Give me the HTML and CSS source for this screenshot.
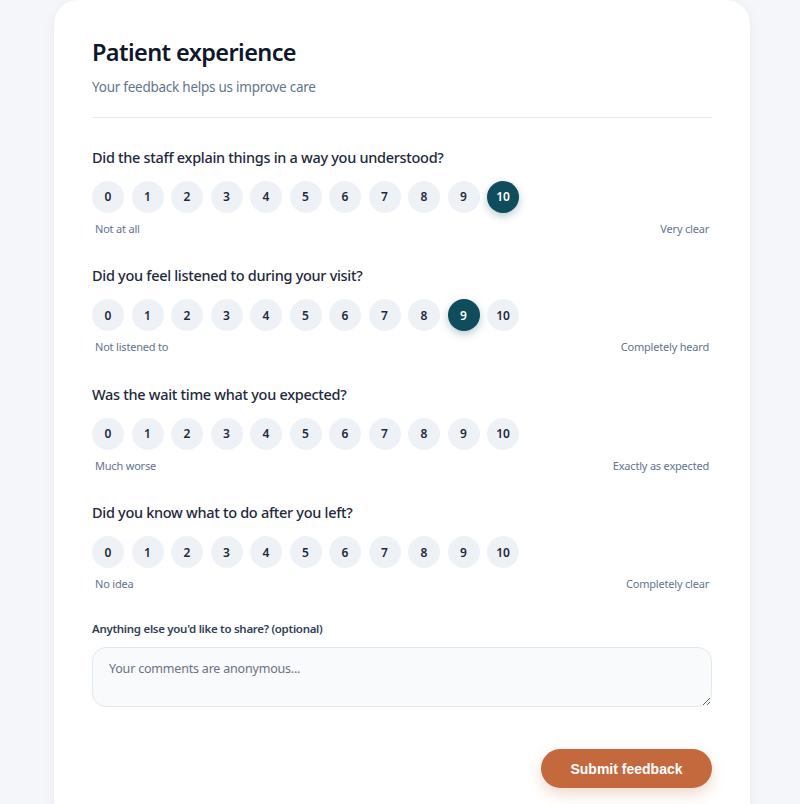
FILE: index.html
```html
<!DOCTYPE html>
<html lang="en">
<head>
<meta charset="utf-8">
<title>Patient experience</title>
<link rel="stylesheet" href="styles.css">
</head>
<body>
<main class="card">
  <header class="head">
    <h1 class="title">Patient experience</h1>
    <p class="subtitle">Your feedback helps us improve care</p>
  </header>

  <section class="question">
    <h2 class="q-text">Did the staff explain things in a way you understood?</h2>
    <div class="scale">
      <button class="pt">0</button><button class="pt">1</button><button class="pt">2</button><button class="pt">3</button><button class="pt">4</button><button class="pt">5</button><button class="pt">6</button><button class="pt">7</button><button class="pt">8</button><button class="pt">9</button><button class="pt selected">10</button>
    </div>
    <div class="ends"><span>Not at all</span><span>Very clear</span></div>
  </section>

  <section class="question">
    <h2 class="q-text">Did you feel listened to during your visit?</h2>
    <div class="scale">
      <button class="pt">0</button><button class="pt">1</button><button class="pt">2</button><button class="pt">3</button><button class="pt">4</button><button class="pt">5</button><button class="pt">6</button><button class="pt">7</button><button class="pt">8</button><button class="pt selected">9</button><button class="pt">10</button>
    </div>
    <div class="ends"><span>Not listened to</span><span>Completely heard</span></div>
  </section>

  <section class="question">
    <h2 class="q-text">Was the wait time what you expected?</h2>
    <div class="scale">
      <button class="pt">0</button><button class="pt">1</button><button class="pt">2</button><button class="pt">3</button><button class="pt">4</button><button class="pt">5</button><button class="pt">6</button><button class="pt">7</button><button class="pt">8</button><button class="pt">9</button><button class="pt">10</button>
    </div>
    <div class="ends"><span>Much worse</span><span>Exactly as expected</span></div>
  </section>

  <section class="question">
    <h2 class="q-text">Did you know what to do after you left?</h2>
    <div class="scale">
      <button class="pt">0</button><button class="pt">1</button><button class="pt">2</button><button class="pt">3</button><button class="pt">4</button><button class="pt">5</button><button class="pt">6</button><button class="pt">7</button><button class="pt">8</button><button class="pt">9</button><button class="pt">10</button>
    </div>
    <div class="ends"><span>No idea</span><span>Completely clear</span></div>
  </section>

  <div class="comments">
    <label class="c-label" for="c">Anything else you'd like to share? (optional)</label>
    <textarea id="c" class="c-box" placeholder="Your comments are anonymous..."></textarea>
  </div>

  <div class="actions">
    <button class="submit">Submit feedback</button>
  </div>
</main>
</body>
</html>
```

FILE: styles.css
```css
* { box-sizing: border-box; }

html, body {
  margin: 0;
  padding: 0;
}

body {
  background: #f4f6f9;
  font-family: "Noto Sans", "Open Sans", sans-serif;
  color: #1e293b;
  display: flex;
  justify-content: center;
}

.card {
  width: 696px;
  margin-left: 4px;
  background: #ffffff;
  border-radius: 24px;
  box-shadow: 0 2px 12px rgba(15, 23, 42, 0.05);
  padding: 36px 38px 40px 38px;
}

.head {
  border-bottom: 1px solid #e6eaf0;
  padding-bottom: 20px;
}

.title {
  margin: 0;
  font-size: 23.5px;
  line-height: 32px;
  font-weight: 600;
  color: #0f172a;
  letter-spacing: -0.6px;
}

.subtitle {
  margin: 9px 0 0;
  font-size: 13.5px;
  line-height: 20px;
  color: #64748b;
  letter-spacing: -0.25px;
}

.question {
  margin-top: 27.5px;
}

.q-text {
  margin: 0;
  font-size: 14.5px;
  line-height: 22px;
  font-weight: 500;
  color: #1e293b;
  letter-spacing: -0.3px;
}

.scale {
  display: flex;
  gap: 7.5px;
  margin-top: 13px;
}

.pt {
  width: 32px;
  height: 32px;
  border-radius: 50%;
  border: none;
  padding: 0;
  background: #eef2f7;
  font-family: "Noto Sans", "Open Sans", sans-serif;
  font-size: 12px;
  font-weight: 600;
  color: #1e293b;
}

.pt.selected {
  background: #0f4c5c;
  color: #ffffff;
  box-shadow: 0 3px 8px rgba(15, 76, 92, 0.3);
}

.ends {
  display: flex;
  justify-content: space-between;
  padding: 0 3px;
  margin-top: 8px;
  font-size: 11px;
  line-height: 16px;
  color: #64748b;
  letter-spacing: -0.2px;
}

.comments {
  margin-top: 28px;
  display: flex;
  flex-direction: column;
}

.c-label {
  font-size: 11.5px;
  line-height: 18px;
  font-weight: 600;
  color: #334155;
  letter-spacing: -0.3px;
}

.c-box {
  margin-top: 9px;
  height: 60px;
  border: 1px solid #e2e8f0;
  border-radius: 14px;
  background: #f8fafc;
  padding: 11px 16px;
  font-family: "Noto Sans", "Open Sans", sans-serif;
  font-size: 12.5px;
  line-height: 20px;
  letter-spacing: -0.2px;
  color: #1e293b;
  resize: vertical;
}

.c-box::placeholder {
  color: #6b7280;
}

.actions {
  display: flex;
  justify-content: flex-end;
  margin-top: 42px;
}

.submit {
  width: 171px;
  height: 39px;
  border: none;
  border-radius: 999px;
  background: #c4693e;
  color: #ffffff;
  font-family: "Liberation Sans", Arial, sans-serif;
  font-size: 14px;
  font-weight: 700;
  box-shadow: 0 6px 14px rgba(196, 105, 62, 0.25);
}
```
